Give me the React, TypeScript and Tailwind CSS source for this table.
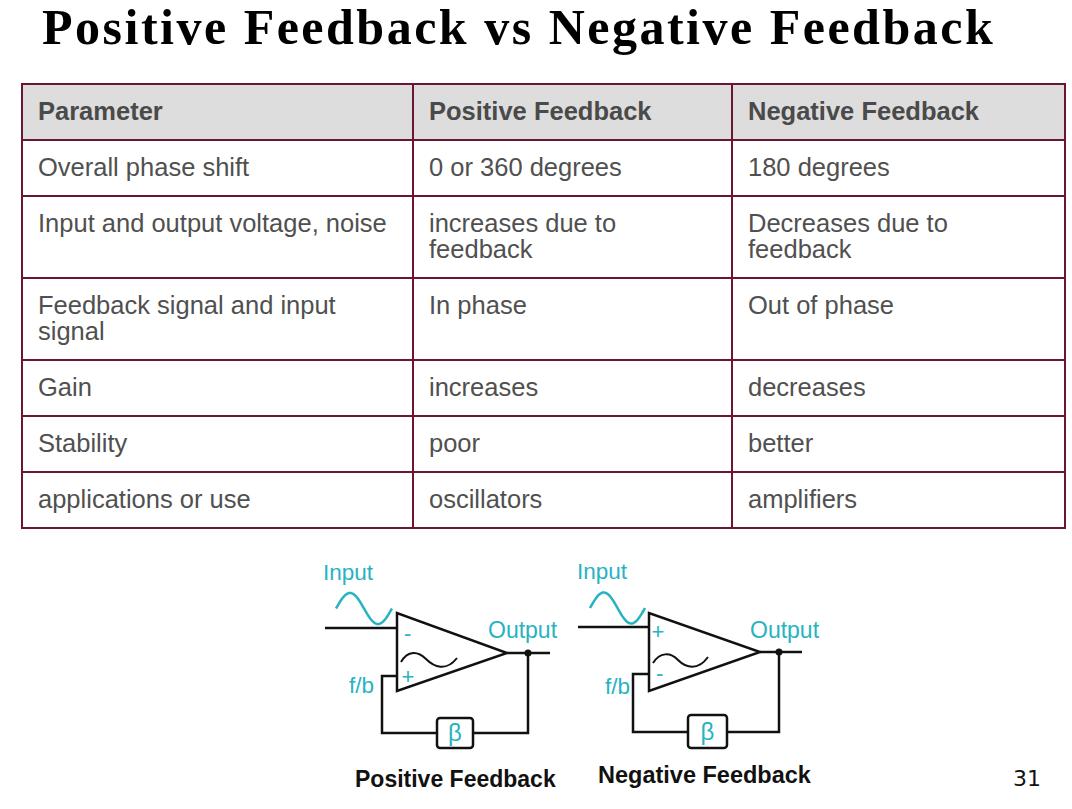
import React from "react";

const TEAL = "#27b3bf";

function sine(x0: number, width: number, cy: number, amp: number): string {
  let d = "";
  for (let i = 0; i <= width; i++) {
    const x = x0 + i;
    const y = cy - amp * Math.sin((2 * Math.PI * i) / width);
    d += (i ? "L" : "M") + x.toFixed(1) + " " + y.toFixed(1) + " ";
  }
  return d;
}

const rows: string[][] = [
  ["Overall phase shift", "0 or 360 degrees", "180 degrees"],
  ["Input and output voltage, noise", "increases due to feedback", "Decreases due to feedback"],
  ["Feedback signal and input signal", "In phase", "Out of phase"],
  ["Gain", "increases", "decreases"],
  ["Stability", "poor", "better"],
  ["applications or use", "oscillators", "amplifiers"],
];

const cell =
  "border-2 border-[#6b1533] align-top pl-[15px] pr-[16px] pt-[13px] pb-[15px] text-[25.5px] leading-[26px] text-left";

function PositiveDiagram() {
  return (
    <svg width="254" height="200" viewBox="0 0 254 200" className="block font-['Liberation_Sans',Arial,sans-serif]">
      <text x="5" y="24" fontSize="22.5" fill={TEAL}>Input</text>
      <path d={sine(18, 56, 52.5, 15.5)} stroke={TEAL} strokeWidth="2.5" fill="none" />
      <path d="M7 72 H79" stroke="#111" strokeWidth="2.5" fill="none" />
      <polygon points="79,57 79,135 189,97" fill="white" stroke="#111" strokeWidth="2.5" />
      <text x="86" y="84.6" fontSize="22" fill={TEAL}>-</text>
      <text x="83.6" y="127.8" fontSize="22" fill={TEAL}>+</text>
      <path d="M83 106 C 90 94, 100 95, 108 103 C 116 111, 128 116, 139 102" stroke="#111" strokeWidth="2" fill="none" />
      <path d="M189 97 H232" stroke="#111" strokeWidth="2.5" fill="none" />
      <circle cx="210" cy="97" r="3.5" fill="#111" />
      <text x="170" y="82" fontSize="23" fill={TEAL}>Output</text>
      <path d="M79 120 H64 V177 H119" stroke="#111" strokeWidth="2.5" fill="none" />
      <rect x="119" y="162" width="36" height="30" rx="3" fill="white" stroke="#111" strokeWidth="2.5" />
      <path d="M155 177 H210 V97" stroke="#111" strokeWidth="2.5" fill="none" />
      <text x="31" y="137" fontSize="22.5" fill={TEAL}>f/b</text>
      <text x="137" y="185" fontSize="24" fill={TEAL} textAnchor="middle">β</text>
    </svg>
  );
}

function NegativeDiagram() {
  return (
    <svg width="255" height="200" viewBox="0 0 255 200" className="block font-['Liberation_Sans',Arial,sans-serif]">
      <text x="5" y="23" fontSize="22.5" fill={TEAL}>Input</text>
      <path d={sine(18, 55, 52, 15.5)} stroke={TEAL} strokeWidth="2.5" fill="none" />
      <path d="M6 71 H77" stroke="#111" strokeWidth="2.5" fill="none" />
      <polygon points="77,57 77,135 188,96" fill="white" stroke="#111" strokeWidth="2.5" />
      <text x="79.6" y="82.8" fontSize="22" fill={TEAL}>+</text>
      <text x="84" y="124.6" fontSize="22" fill={TEAL}>-</text>
      <path d="M81 107 C 88 96, 98 96, 106 104 C 114 112, 126 115, 136 101" stroke="#111" strokeWidth="2" fill="none" />
      <path d="M188 96 H230" stroke="#111" strokeWidth="2.5" fill="none" />
      <circle cx="207" cy="96" r="3.5" fill="#111" />
      <text x="178" y="82" fontSize="23" fill={TEAL}>Output</text>
      <path d="M77 118 H61 V176 H116" stroke="#111" strokeWidth="2.5" fill="none" />
      <rect x="116" y="159" width="39" height="33" rx="3" fill="white" stroke="#111" strokeWidth="2.5" />
      <path d="M155 176 H207 V96" stroke="#111" strokeWidth="2.5" fill="none" />
      <text x="33" y="138" fontSize="22.5" fill={TEAL}>f/b</text>
      <text x="135.5" y="184" fontSize="24" fill={TEAL} textAnchor="middle">β</text>
    </svg>
  );
}

export default function App() {
  return (
    <div className="w-[1072px] h-[809px] bg-white overflow-hidden">
      <div className="h-[83px]">
        <h1 className="pl-[42px] font-['Liberation_Serif','Times_New_Roman',serif] font-bold text-[50px] leading-[54px] tracking-[2.5px] text-black whitespace-nowrap">
          Positive Feedback vs Negative Feedback
        </h1>
      </div>
      <div className="pl-[21px]">
        <table className="w-[1043px] table-fixed border-collapse font-['Liberation_Sans',Arial,sans-serif] text-[#505050]">
          <colgroup>
            <col className="w-[391px]" />
            <col className="w-[319px]" />
            <col className="w-[333px]" />
          </colgroup>
          <thead>
            <tr className="bg-[#dddddd]">
              <th className={cell + " font-bold text-[#4a4a4a]"}>Parameter</th>
              <th className={cell + " font-bold text-[#4a4a4a]"}>Positive Feedback</th>
              <th className={cell + " font-bold text-[#4a4a4a]"}>Negative Feedback</th>
            </tr>
          </thead>
          <tbody>
            {rows.map((r, i) => (
              <tr key={i} className="bg-white">
                {r.map((c, j) => (
                  <td key={j} className={cell + " font-normal"}>
                    {c}
                  </td>
                ))}
              </tr>
            ))}
          </tbody>
        </table>
      </div>
      <div className="flex pl-[318px] mt-[27px] font-['Liberation_Sans',Arial,sans-serif]">
        <div className="flex flex-col w-[254px]">
          <PositiveDiagram />
          <div className="mt-[12px] pl-[37px] text-[23px] leading-none font-bold text-[#111] whitespace-nowrap">
            Positive Feedback
          </div>
        </div>
        <div className="flex flex-col w-[255px]">
          <NegativeDiagram />
          <div className="mt-[8px] pl-[26px] text-[23.5px] leading-none font-bold text-[#111] whitespace-nowrap">
            Negative Feedback
          </div>
        </div>
        <div className="ml-[186px] mt-[212px] font-['DejaVu_Sans',sans-serif] text-[22px] leading-none text-[#111]">
          31
        </div>
      </div>
    </div>
  );
}
